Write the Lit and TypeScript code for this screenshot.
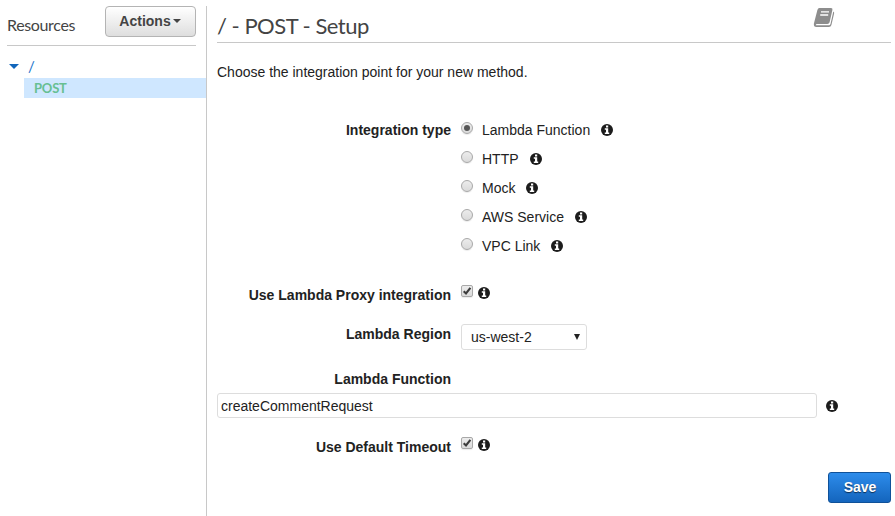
import { LitElement, html, css, svg } from "lit";
import { customElement, property } from "lit/decorators.js";
import { classMap } from "lit/directives/class-map.js";

@customElement("info-icon")
class InfoIcon extends LitElement {
  static styles = css`
    :host { display: block; width: 12px; height: 12px; flex: none; }
    svg { display: block; }
  `;
  render() {
    return html`<svg width="12" height="12" viewBox="0 0 12 12">
      <circle cx="6" cy="6" r="6" fill="#1c1c1c" />
      <path d="M5 1.5h2.2v2H5zM3.8 4.3h3.4v4.2h1V10H3.8V8.5H5V5.8H3.8z" fill="#fff" />
    </svg>`;
  }
}

@customElement("choice-mark")
class ChoiceMark extends LitElement {
  @property() kind = "radio";
  @property({ type: Boolean }) checked = false;
  static styles = css`
    :host { display: block; flex: none; }
    .mark {
      box-sizing: border-box; width: 12px; height: 12px;
      border: 1px solid #a8a8a8; background: linear-gradient(#ececec, #dadada);
      display: flex; align-items: center; justify-content: center;
      box-shadow: 0 1px 1px rgba(0, 0, 0, 0.08);
    }
    .radio { border-radius: 50%; }
    .checkbox { border-radius: 2px; }
    .dot { width: 6px; height: 6px; border-radius: 50%; background: #555; }
    svg { display: block; flex: none; }
  `;
  render() {
    const inner = !this.checked
      ? ""
      : this.kind === "radio"
        ? html`<span class="dot"></span>`
        : html`<svg width="10" height="10" viewBox="0 0 10 10">
            ${svg`<path d="M1.7 5.2L4 7.4L8.4 1.8" fill="none" stroke="#3c3c3c" stroke-width="2.1" />`}
          </svg>`;
    return html`<div class=${classMap({ mark: true, [this.kind]: true })}>${inner}</div>`;
  }
}

@customElement("app-root")
class AppRoot extends LitElement {
  private types = ["Lambda Function", "HTTP", "Mock", "AWS Service", "VPC Link"];

  static styles = css`
    :host {
      display: flex; width: 895px; height: 516px; box-sizing: border-box;
      padding-top: 6px; overflow: hidden; background: #fff; color: #222;
      font: 14px/20px "Liberation Sans", Arial, sans-serif;
    }
    .side { width: 206px; flex: none; border-right: 1px solid #c8c8c8; }
    .side-head {
      display: flex; justify-content: space-between; height: 39px;
      margin: 0 10px 0 7px; border-bottom: 1px solid #c8c8c8;
    }
    .side-title { font: 16px/20px Lato, sans-serif; color: #444; padding-top: 9px; letter-spacing: -0.35px; }
    .actions {
      display: flex; align-items: center; justify-content: center; gap: 2px;
      width: 91px; height: 31px; box-sizing: border-box; padding: 0 1px 1px 0;
      border: 1px solid #b4b4b4; border-radius: 4px; color: #444; font-weight: bold;
      background: linear-gradient(#fff, #dedede);
    }
    .caret { border: 4px solid transparent; border-top-color: #444; border-bottom: 0; }
    .root { display: flex; align-items: center; height: 20px; padding: 10px 0 2px 9px; color: #1b74cb; font: 15px/20px Lato, sans-serif; }
    .toggle { border: 5px solid transparent; border-top: 5px solid #1166bb; border-bottom: 0; margin-right: 9px; }
    .method {
      margin-left: 24px; height: 20px; padding-left: 10px; background: #cfe7ff;
      color: #67bf92; font: bold 13px/20px Lato, sans-serif; letter-spacing: -0.2px;
    }
    .main { flex: 1; padding: 0 4px 0 10px; min-width: 0; }
    .head { display: flex; justify-content: space-between; height: 36px; border-bottom: 1px solid #c8c8c8; }
    .title { font: 22px/28px Lato, sans-serif; color: #444; padding-top: 6px; letter-spacing: -0.5px; }
    .book { display: block; margin: 1px 56px 0 0; }
    .intro { padding-top: 19px; height: 58px; }
    .row { display: flex; }
    .label { width: 234px; margin-right: 10px; flex: none; text-align: right; font-weight: bold; }
    .options { display: flex; flex-direction: column; gap: 9px; }
    .option { display: flex; align-items: center; height: 20px; }
    .option choice-mark { margin: -4px 9px 0 0; }
    .option info-icon { margin-left: 11px; }
    .proxy { margin-top: 29px; height: 39px; }
    .checks { display: flex; gap: 5px; }
    .checks info-icon { margin-top: 2px; }
    .select {
      display: flex; align-items: center; justify-content: space-between;
      box-sizing: border-box; width: 126px; height: 26px; padding: 0 6px 0 9px;
      border: 1px solid #ddd; border-radius: 3px;
    }
    .arrow { border: 3.5px solid transparent; border-top: 6px solid #222; border-bottom: 0; }
    .region { height: 45px; }
    .function { display: flex; align-items: center; margin-top: 4px; }
    .input {
      box-sizing: border-box; width: 600px; height: 25px; padding: 0 3px; line-height: 24px;
      border: 1px solid #ddd; border-radius: 3px; margin-right: 9px;
    }
    .timeout { margin-top: 19px; height: 35px; }
    .save {
      margin-left: auto; box-sizing: border-box; width: 63px; height: 31px;
      border: 1px solid #0f5199; border-radius: 3px; text-align: center;
      color: #fff; font-weight: bold; line-height: 29px; padding-left: 1px;
      text-shadow: 0 1px 1px rgba(0, 0, 0, 0.6);
      background: linear-gradient(#2d8ceb, #1465bd);
    }
  `;

  render() {
    return html`
      <div class="side">
        <div class="side-head">
          <div class="side-title">Resources</div>
          <div class="actions">Actions<span class="caret"></span></div>
        </div>
        <div class="root"><span class="toggle"></span>/</div>
        <div class="method">POST</div>
      </div>
      <div class="main">
        <div class="head">
          <div class="title">/ - POST - Setup</div>
          <svg class="book" width="22" height="21" viewBox="0 0 22 21">
            <path d="M6.4 1H18Q19.9 1 19.4 3L16.6 15.2Q16.1 17 14.3 17H4.2Q2.6 17 2.8 18.2H16Q17.1 18.2 17.5 17L20.3 4.4Q21.5 5 21.1 6.5L18.4 18.1Q17.8 20 16 20H3.4Q.4 20 .9 16.5L4.4 3Q4.9 1 6.4 1Z" fill="#8d8d8d" />
            <path d="M8 4.9H16M7.2 8H15.2" stroke="#fff" stroke-width="1.3" />
          </svg>
        </div>
        <div class="intro">Choose the integration point for your new method.</div>
        <div class="row types">
          <div class="label">Integration type</div>
          <div class="options">
            ${this.types.map((t, i) => html`<div class="option">
              <choice-mark kind="radio" ?checked=${i === 0}></choice-mark>${t}<info-icon></info-icon>
            </div>`)}
          </div>
        </div>
        <div class="row proxy">
          <div class="label">Use Lambda Proxy integration</div>
          <div class="checks"><choice-mark kind="checkbox" checked></choice-mark><info-icon></info-icon></div>
        </div>
        <div class="row region">
          <div class="label">Lambda Region</div>
          <div class="select">us-west-2<span class="arrow"></span></div>
        </div>
        <div class="row"><div class="label">Lambda Function</div></div>
        <div class="function">
          <div class="input">createCommentRequest</div><info-icon></info-icon>
        </div>
        <div class="row timeout">
          <div class="label">Use Default Timeout</div>
          <div class="checks"><choice-mark kind="checkbox" checked></choice-mark><info-icon></info-icon></div>
        </div>
        <div class="save">Save</div>
      </div>
    `;
  }
}
